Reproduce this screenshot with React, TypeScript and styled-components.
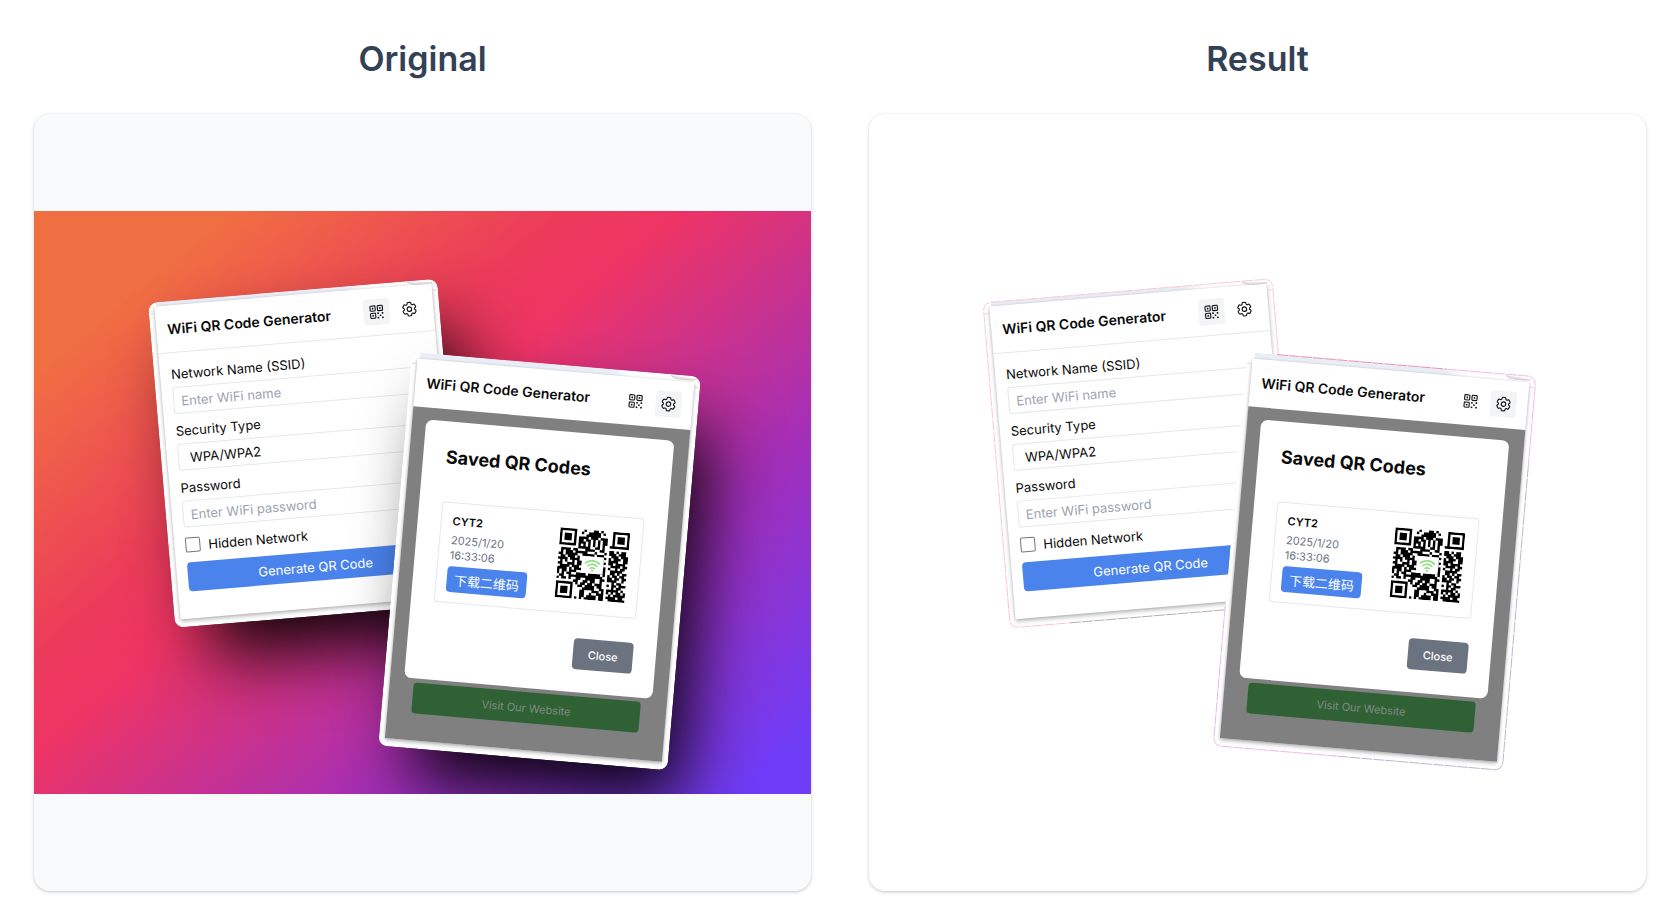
import React, { useId } from "react";
import styled, { createGlobalStyle, css } from "styled-components";
import { HiOutlineCog6Tooth, HiOutlineQrCode } from "react-icons/hi2";

const GlobalStyle = createGlobalStyle`
  *, *::before, *::after { box-sizing: border-box; }
  body {
    margin: 0;
    background: #fff;
    color: #0a0a0a;
    font-family: Inter, "Noto Sans CJK SC", sans-serif;
  }
  button, input, select { font: inherit; }
  h1, h2, h3, p { margin: 0; }
`;

const Page = styled.main`
  display: grid;
  grid-template-columns: 1fr 1fr;
  gap: 58px;
  padding: 38px 28px 30px 34px;
`;

const Column = styled.section`
  display: flex;
  flex-direction: column;
  gap: 35px;
  min-width: 0;
`;

const Heading = styled.h2`
  color: #334155;
  font-size: 34px;
  font-weight: 600;
  line-height: 41px;
  text-align: center;
`;

const Panel = styled.div<{ $tinted?: boolean }>`
  display: flex;
  align-items: center;
  aspect-ratio: 1;
  overflow: hidden;
  border-radius: 16px;
  background: ${(p) => (p.$tinted ? "#f9fafc" : "#fff")};
  box-shadow: 0 1px 4px rgba(0, 0, 0, 0.14), 0 1px 2px rgba(0, 0, 0, 0.1);
`;

const Stage = styled.div<{ $filled?: boolean }>`
  position: relative;
  width: 100%;
  aspect-ratio: 4 / 3;
  overflow: hidden;
  ${(p) =>
    p.$filled &&
    css`
      background: linear-gradient(140deg, #f06f42 13%, #ec3b5a 36%, #ee3465 44%, #a22fba 71%, #6f3cf7 95%);
    `}
`;

const Card = styled.article<{ $shadow?: boolean }>`
  position: absolute;
  width: 290px;
  transform-origin: 0 0;
  border-radius: 9px;
  background: linear-gradient(90deg, #e9eef6 70%, #fff 78%) 8px 0 / 274px 6px no-repeat, #fff;
  ${(p) =>
    p.$shadow &&
    css`
      box-shadow: 24px 42px 70px -10px rgba(0, 0, 0, 0.95);
    `}
`;

const BackCard = styled(Card)`
  left: 14.7%;
  top: 15.8%;
  height: 326px;
  padding: 4px 6px 8px;
  transform: rotate(-4.8deg);
`;

const FrontCard = styled(Card)`
  left: 48.6%;
  top: 24.2%;
  height: 395px;
  padding: 6px 6px 8px;
  transform: rotate(4.9deg);
`;

const Outline = styled.svg`
  position: absolute;
  inset: 0;
  width: 100%;
  height: 100%;
  overflow: visible;
  pointer-events: none;
`;

const Screen = styled.div`
  display: flex;
  flex-direction: column;
  height: 100%;
  background: #fff;
  box-shadow: 0 2px 4px rgba(0, 0, 0, 0.28), 0 0 2px rgba(0, 0, 0, 0.14);
`;

const Header = styled.header<{ $ruled?: boolean }>`
  display: flex;
  align-items: center;
  gap: 7px;
  height: 48px;
  padding: 0 11px;
  border-bottom: 1px solid ${(p) => (p.$ruled ? "#e5e7eb" : "#fff")};
`;

const AppTitle = styled.h1`
  flex: 1;
  font-size: 14px;
  font-weight: 600;
  line-height: 20px;
  white-space: nowrap;
`;

const IconButton = styled.button<{ $active?: boolean }>`
  display: grid;
  place-items: center;
  width: 26px;
  height: 26px;
  padding: 0;
  border: 0;
  border-radius: 3px;
  background: ${(p) => (p.$active ? "#f3f4f6" : "transparent")};
  color: #111;
  font-size: 18px;
`;

const Form = styled.form`
  display: flex;
  flex-direction: column;
  gap: 8px;
  padding: 12px 11px 0;
`;

const Field = styled.div`
  display: flex;
  flex-direction: column;
  gap: 4px;
`;

const Label = styled.label`
  font-size: 13px;
  line-height: 18px;
`;

const control = css`
  width: 100%;
  height: 27px;
  margin: 0;
  border: 1px solid #e5e7eb;
  border-radius: 3px;
  background: #fff;
  color: #0a0a0a;
  font-size: 13px;
`;

const TextInput = styled.input`
  ${control}
  padding: 0 7px;
  &::placeholder { color: #9ca3af; opacity: 1; }
`;

const Select = styled.select`
  ${control}
  padding: 0 11px;
  appearance: none;
`;

const CheckRow = styled.label`
  display: flex;
  align-items: center;
  gap: 8px;
  height: 19px;
  font-size: 13px;
`;

const Checkbox = styled.input`
  appearance: none;
  width: 15px;
  height: 15px;
  margin: 0;
  border: 1px solid #767676;
  border-radius: 2px;
  background: #fff;
`;

const Button = styled.button<{ $bg: string }>`
  height: 31px;
  padding: 0;
  border: 0;
  border-radius: 4px;
  background: ${(p) => p.$bg};
  color: #fff;
  font-size: 11px;
`;

const SubmitButton = styled(Button)`
  height: 29px;
  font-size: 13px;
`;

const DownloadButton = styled(Button)`
  width: 80px;
  height: 26px;
  margin-top: 3px;
  font-size: 13px;
`;

const CloseButton = styled(Button)`
  align-self: flex-end;
  width: 60px;
  margin-top: 24px;
  font-weight: 500;
`;

const WebsiteButton = styled(Button)`
  margin: 4px 11px 0 10px;
  color: #808a82;
`;

const Backdrop = styled.div`
  flex: 1;
  display: flex;
  flex-direction: column;
  padding: 12px 15px 0 14px;
  background: #808080;
`;

const Dialog = styled.div`
  display: flex;
  flex-direction: column;
  height: 259px;
  padding: 23px;
  border-radius: 7px;
  background: #fff;
`;

const DialogTitle = styled.h2`
  font-size: 18px;
  font-weight: 700;
  line-height: 26px;
  white-space: nowrap;
`;

const SavedItem = styled.div`
  display: flex;
  align-items: center;
  justify-content: space-between;
  height: 102px;
  margin-top: 31px;
  padding: 0 12px 0 10px;
  border: 1px solid #e5e7eb;
  border-radius: 3px;
`;

const ItemInfo = styled.div`
  display: flex;
  flex-direction: column;
`;

const ItemName = styled.h3`
  padding-left: 1px;
  font-size: 11px;
  font-weight: 600;
  line-height: 16px;
`;

const ItemDate = styled.p`
  margin-top: 4px;
  padding-left: 1px;
  color: #6b7280;
  font-size: 11px;
  line-height: 15px;
`;

const QrImage = styled.svg`
  width: 70px;
  height: 70px;
`;

const QR_ROWS = [
  "1111111000100011010001111111",
  "1000001001001111101001000001",
  "1011101000011111100001011101",
  "1011101011110111011101011101",
  "1011101011011010101101011101",
  "1000001011101010101101000001",
  "1111111010101010101011111111",
  "0000000011111001101000000000",
  "0111101100011110011011010110",
  "0101110111110001000111101110",
  "1101111100111110111001110111",
  "0110111010000000000110111011",
  "1111011110000000001011110011",
  "0101001011000000000111011110",
  "1100111011000000001001111011",
  "0111101110000000000110010110",
  "1111010111000000001101111100",
  "1011011100000000001101101011",
  "1010110011110111110110110110",
  "0110011111111111111011011011",
  "1011010011001111001111110010",
  "0000000110011011001000101100",
  "1111111010110110111010110111",
  "1000001001101111011000101100",
  "1011101000011111001111111010",
  "1011101000110001110110101101",
  "1011101000110010011101011111",
  "1000001000110111101111110110",
  "1111111010101111101101111111",
];

function QrCode() {
  const d = QR_ROWS.map((row, y) => {
    const wide = row.slice(0, 20) + "0" + row.slice(20);
    return [...wide].map((c, x) => (c === "1" ? `M${x} ${y}h1v1h-1z` : "")).join("");
  }).join("");
  return (
    <QrImage viewBox="0 0 29 29" role="img" aria-label="QR code for CYT2">
      <path d={d} fill="#000" />
      <rect x="10" y="11" width="9" height="7" fill="#fff" />
      <g fill="none" stroke="#86dc76" strokeWidth="0.6" strokeLinecap="round">
        <path d="M11.6 13.8q2.9-2.3 5.8 0" />
        <path d="M12.6 14.9q1.9-1.5 3.8 0" />
        <path d="M13.6 15.9q.9-.7 1.8 0" />
      </g>
      <circle cx="14.5" cy="16.8" r="0.4" fill="#7bd66a" />
    </QrImage>
  );
}

function AppHeader({ active }: { active: "codes" | "settings" }) {
  return (
    <Header $ruled={active === "codes"}>
      <AppTitle>WiFi QR Code Generator</AppTitle>
      <IconButton type="button" aria-label="QR codes" $active={active === "codes"}>
        <HiOutlineQrCode />
      </IconButton>
      <IconButton type="button" aria-label="Settings" $active={active === "settings"}>
        <HiOutlineCog6Tooth />
      </IconButton>
    </Header>
  );
}

function FrameCorner() {
  return (
    <Outline aria-hidden="true">
      <path d="M260 1q3 3 9 3h12q3 0 4-1" fill="#e2e2e2" stroke="#cfcfcf" />
      <path d="M1 11h5M284 11h5" stroke="#dcdcdc" />
    </Outline>
  );
}

function GeneratorCard({ cutout }: { cutout?: boolean }) {
  const id = useId();
  return (
    <BackCard $shadow={!cutout}>
      <Screen>
        <AppHeader active="codes" />
        <Form onSubmit={(e) => e.preventDefault()}>
          <Field>
            <Label htmlFor={`${id}-ssid`}>Network Name (SSID)</Label>
            <TextInput id={`${id}-ssid`} placeholder="Enter WiFi name" />
          </Field>
          <Field>
            <Label htmlFor={`${id}-type`}>Security Type</Label>
            <Select id={`${id}-type`}>
              <option>WPA/WPA2</option>
            </Select>
          </Field>
          <Field>
            <Label htmlFor={`${id}-pass`}>Password</Label>
            <TextInput id={`${id}-pass`} type="password" placeholder="Enter WiFi password" />
          </Field>
          <CheckRow>
            <Checkbox type="checkbox" />
            Hidden Network
          </CheckRow>
          <SubmitButton type="submit" $bg="#4a83ec">
            Generate QR Code
          </SubmitButton>
        </Form>
      </Screen>
      <FrameCorner />
      {cutout && (
        <Outline aria-hidden="true">
          <g fill="none" strokeWidth="0.7">
            <path d="M0 200V9Q0 0 9 0H281Q290 0 290 9V80" stroke="#f7b5bd" strokeDasharray="11 1" />
            <path d="M0 200V317Q0 326 9 326H60" stroke="#f5b0c4" strokeDasharray="11 1" />
            <path d="M60 326H240" stroke="#a08a9a" strokeDasharray="11 1" />
          </g>
        </Outline>
      )}
    </BackCard>
  );
}

function SavedCodesCard({ cutout }: { cutout?: boolean }) {
  return (
    <FrontCard $shadow={!cutout}>
      <Screen>
        <AppHeader active="settings" />
        <Backdrop>
          <Dialog role="dialog" aria-label="Saved QR Codes">
            <DialogTitle>Saved QR Codes</DialogTitle>
            <SavedItem>
              <ItemInfo>
                <ItemName>CYT2</ItemName>
                <ItemDate>
                  2025/1/20
                  <br />
                  16:33:06
                </ItemDate>
                <DownloadButton type="button" $bg="#4a83ec">
                  下载二维码
                </DownloadButton>
              </ItemInfo>
              <QrCode />
            </SavedItem>
            <CloseButton type="button" $bg="#6b7280">
              Close
            </CloseButton>
          </Dialog>
          <WebsiteButton type="button" $bg="#2f6135">
            Visit Our Website
          </WebsiteButton>
        </Backdrop>
      </Screen>
      <FrameCorner />
      {cutout && (
        <Outline aria-hidden="true">
          <g fill="none" strokeWidth="0.7">
            <path d="M30 0H200" stroke="#e56a9c" strokeDasharray="11 1" />
            <path d="M200 0H281Q290 0 290 9V90" stroke="#eda0d0" strokeDasharray="11 1" />
            <path d="M290 90V386Q290 395 281 395H120" stroke="#a79ab8" strokeDasharray="11 1" />
            <path d="M0 255V386Q0 395 9 395H120" stroke="#dfa0dc" strokeDasharray="11 1" />
          </g>
        </Outline>
      )}
    </FrontCard>
  );
}

export default function App() {
  return (
    <>
      <GlobalStyle />
      <Page>
        <Column>
          <Heading>Original</Heading>
          <Panel $tinted>
            <Stage $filled>
              <GeneratorCard />
              <SavedCodesCard />
            </Stage>
          </Panel>
        </Column>
        <Column>
          <Heading>Result</Heading>
          <Panel>
            <Stage>
              <GeneratorCard cutout />
              <SavedCodesCard cutout />
            </Stage>
          </Panel>
        </Column>
      </Page>
    </>
  );
}
